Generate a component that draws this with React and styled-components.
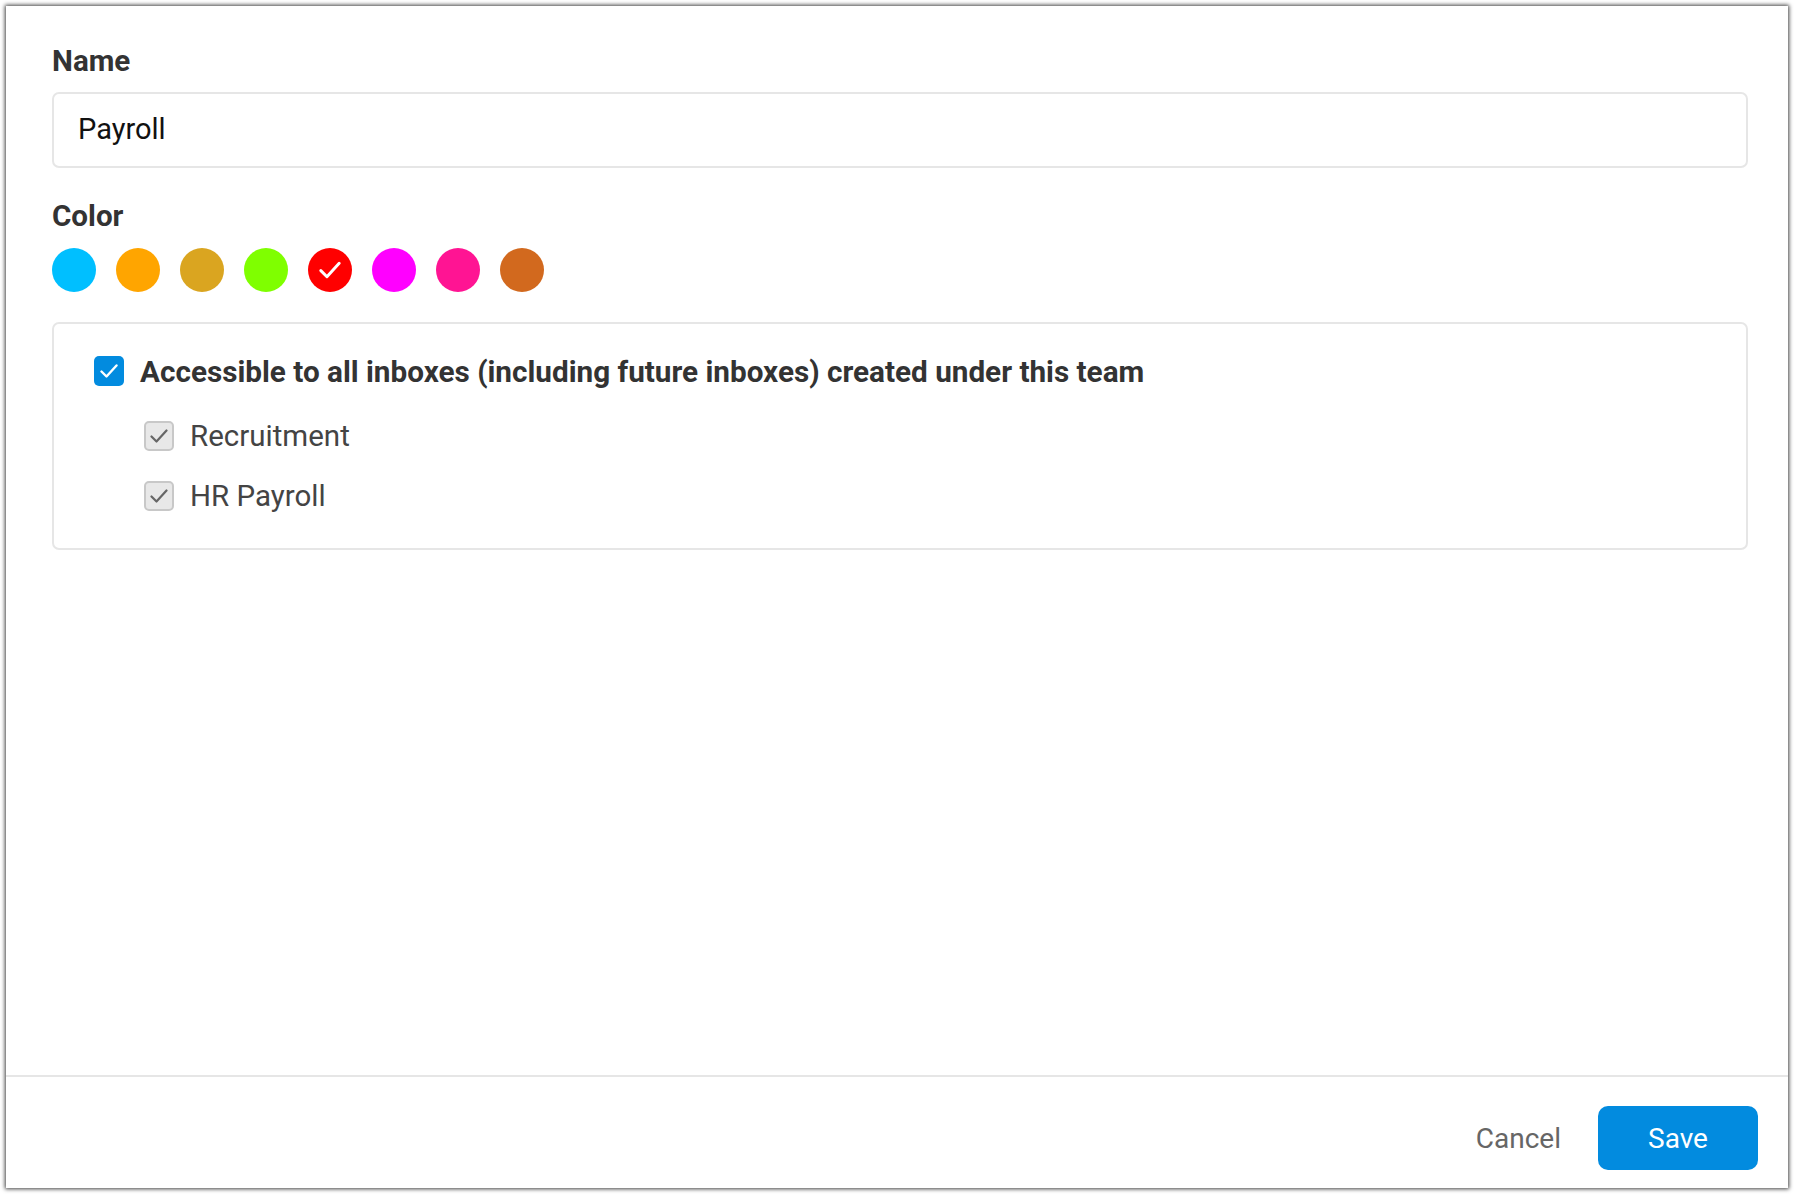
import React from 'react'
import styled, { createGlobalStyle } from 'styled-components'

const colors = ['#00bfff', '#ffa500', '#daa520', '#7fff00', '#ff0000', '#ff00ff', '#ff1493', '#d2691e']
const inboxes = ['Recruitment', 'HR Payroll']

const Global = createGlobalStyle`
    html, body { margin: 0; padding: 0; background: #fff; }
    body { font-family: Roboto, "Liberation Sans", sans-serif; color: #333; }
`

const Page = styled.div`
    width: 1794px;
    height: 1194px;
    padding: 6px;
    box-sizing: border-box;
`

const Dialog = styled.div`
    height: 100%;
    display: flex;
    flex-direction: column;
    background: #fff;
    box-shadow: 0 0 4px 1px rgba(0, 0, 0, 0.75);
`

const Content = styled.div`
    flex: 1;
    padding: 38px 40px 0 46px;
`

const Label = styled.div`
    font-size: 29.6px;
    line-height: 34px;
    font-weight: 700;
    color: #333;
    margin-bottom: 14px;
`

const ColorLabel = styled(Label)`
    margin-bottom: 15px;
`

const NameInput = styled.div`
    height: 76px;
    box-sizing: border-box;
    border: 2px solid #e6e6e6;
    border-radius: 7px;
    padding: 0 24px 2px;
    display: flex;
    align-items: center;
    font-size: 29px;
    color: #111;
    margin-bottom: 31px;
`

const Swatches = styled.div`
    display: flex;
    gap: 20px;
    margin-bottom: 30px;
`

const Swatch = styled.div`
    width: 44px;
    height: 44px;
    border-radius: 50%;
    background: ${p => p.color};
    display: flex;
    align-items: center;
    justify-content: center;
`

const AccessBox = styled.div`
    height: 228px;
    box-sizing: border-box;
    border: 2px solid #e6e6e6;
    border-radius: 7px;
    padding: 32px 40px;
`

const Row = styled.div`
    display: flex;
    align-items: center;
    height: 30px;
    gap: 16px;
    font-size: 29.5px;
    color: #444;
`

const SubRows = styled.div`
    display: flex;
    flex-direction: column;
    gap: 30px;
    margin: 35px 0 0 50px;
`

const BoldText = styled.span`
    font-size: 29.7px;
    font-weight: 700;
    color: #333;
`

const Box = styled.div`
    width: 30px;
    height: 30px;
    box-sizing: border-box;
    border-radius: 5px;
    display: flex;
    align-items: center;
    justify-content: center;
    background: ${p => (p.$disabled ? '#e8e8e8' : '#028bdf')};
    border: ${p => (p.$disabled ? '2px solid #c8c8c8' : 'none')};
`

const Footer = styled.div`
    height: 113px;
    box-sizing: border-box;
    border-top: 2px solid #e6e6e6;
    padding: 29px 30px 18px 0;
    display: flex;
    align-items: center;
    justify-content: flex-end;
    gap: 37px;
`

const Cancel = styled.button`
    border: none;
    background: none;
    padding: 0;
    font-family: inherit;
    font-size: 28px;
    color: #666;
`

const Save = styled.button`
    width: 160px;
    height: 64px;
    border: none;
    border-radius: 10px;
    background: #028bdf;
    color: #fff;
    font-family: inherit;
    font-size: 28px;
    font-weight: 400;
`

const Check = ({ color, width = 2.4, size = 18 }) => (
    <svg width={size} height={size} viewBox="0 0 18 18" fill="none">
        <path d="M1.5 9.5 L6.5 14.5 L16.5 3.5" stroke={color} strokeWidth={width} strokeLinecap="round" strokeLinejoin="round" />
    </svg>
)

const App = () => {
    return (
        <Page>
            <Global />
            <Dialog>
                <Content>
                    <Label>Name</Label>
                    <NameInput>Payroll</NameInput>
                    <ColorLabel>Color</ColorLabel>
                    <Swatches>
                        {colors.map(c => (
                            <Swatch key={c} color={c}>
                                {c === '#ff0000' && <Check color="#fff" size={22} />}
                            </Swatch>
                        ))}
                    </Swatches>
                    <AccessBox>
                        <Row>
                            <Box><Check color="#fff" /></Box>
                            <BoldText>Accessible to all inboxes (including future inboxes) created under this team</BoldText>
                        </Row>
                        <SubRows>
                            {inboxes.map(name => (
                                <Row key={name}>
                                    <Box $disabled><Check color="#666" width={2.2} /></Box>
                                    {name}
                                </Row>
                            ))}
                        </SubRows>
                    </AccessBox>
                </Content>
                <Footer>
                    <Cancel>Cancel</Cancel>
                    <Save>Save</Save>
                </Footer>
            </Dialog>
        </Page>
    )
}

export default App
